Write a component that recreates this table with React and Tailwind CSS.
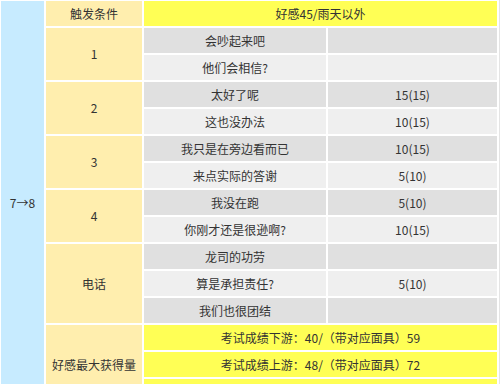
const font = { fontFamily: '"Noto Sans CJK SC", "Noto Sans", sans-serif' };

const groups = [
  { label: '1', rows: [['会吵起来吧', ''], ['他们会相信?', '']] },
  { label: '2', rows: [['太好了呢', '15(15)'], ['这也没办法', '10(15)']] },
  { label: '3', rows: [['我只是在旁边看而已', '10(15)'], ['来点实际的答谢', '5(10)']] },
  { label: '4', rows: [['我没在跑', '5(10)'], ['你刚才还是很逊啊?', '10(15)']] },
  { label: '电话', rows: [['龙司的功劳', ''], ['算是承担责任?', '5(10)'], ['我们也很团结', '']] },
];

const maxRows = ['考试成绩下游：40/（带对应面具）59', '考试成绩上游：48/（带对应面具）72', ''];

const spans = { 2: 'row-span-2', 3: 'row-span-3' };

export default function App() {
  let n = 0;
  return (
    <div className="w-[500px] h-[384px] overflow-hidden bg-white pl-px pt-px border-r border-[#e4e4e4] text-[12px] text-[#333]" style={font}>
      <div className="grid grid-cols-[43px_96px_182px_169px] auto-rows-[25px] gap-[2px]">
        <div className="row-span-[15] bg-[#c7ebff] flex items-center justify-center">7→8</div>
        <div className="bg-[#ffeeae] flex items-center justify-center">触发条件</div>
        <div className="col-span-2 bg-[#ffff55] flex items-center justify-center">好感45/雨天以外</div>

        {groups.map((g) => (
          <>
            <div key={g.label} className={`${spans[g.rows.length]} bg-[#ffeeae] flex items-center justify-center`}>
              {g.label}
            </div>
            {g.rows.map(([text, val]) => {
              const dark = n++ % 2 === 0;
              const bg = dark ? 'bg-[#e0e0e0]' : 'bg-[#efefef]';
              return (
                <>
                  <div key={text} className={`${bg} flex items-center justify-center`}>{text}</div>
                  <div key={text + 'v'} className={`${bg} flex items-center justify-center`}>{val}</div>
                </>
              );
            })}
          </>
        ))}

        <div className="row-span-3 bg-[#ffeeae] flex items-center justify-center">好感最大获得量</div>
        {maxRows.map((t, i) => (
          <div key={i} className="col-span-2 bg-[#ffff55] flex items-center justify-center">{t}</div>
        ))}
      </div>
    </div>
  );
}
